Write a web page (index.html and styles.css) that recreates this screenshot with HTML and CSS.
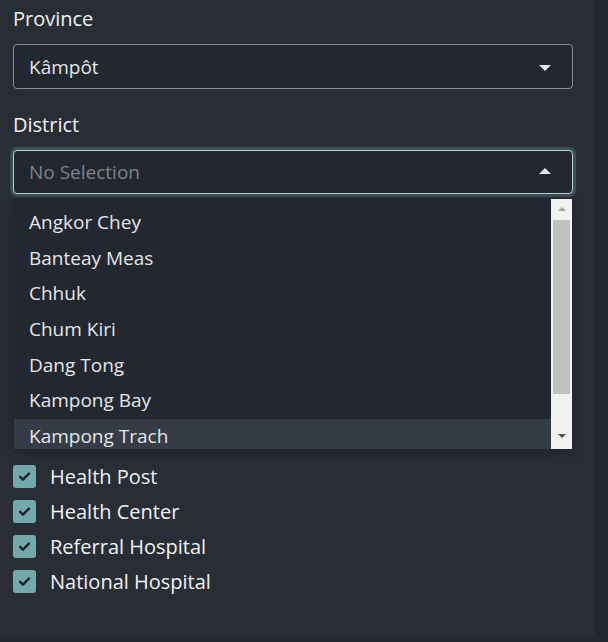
FILE: index.html
```html
<!DOCTYPE html>
<html lang="en">
<head>
<meta charset="utf-8">
<link rel="stylesheet" href="styles.css">
</head>
<body>
<div class="panel">
  <div class="field">
    <label class="label">Province</label>
    <div class="select">
      <span class="value">Kâmpôt</span>
      <span class="caret down"></span>
    </div>
  </div>
  <div class="field district">
    <label class="label">District</label>
    <div class="select focused">
      <span class="value placeholder">No Selection</span>
      <span class="caret up"></span>
    </div>
    <div class="menu">
      <ul class="options">
        <li>Angkor Chey</li>
        <li>Banteay Meas</li>
        <li>Chhuk</li>
        <li>Chum Kiri</li>
        <li>Dang Tong</li>
        <li>Kampong Bay</li>
        <li class="active">Kampong Trach</li>
      </ul>
      <div class="scrollbar">
        <span class="sb-arrow sb-up"></span>
        <span class="sb-thumb"></span>
        <span class="sb-arrow sb-down"></span>
      </div>
    </div>
  </div>
  <div class="checks">
    <label class="check"><span class="box"><svg viewBox="0 0 24 24" width="15" height="15"><path d="M5 12.5l4.5 4.5L19 7.5" fill="none" stroke="#20252c" stroke-width="4" stroke-linecap="round" stroke-linejoin="round"/></svg></span>Health Post</label>
    <label class="check"><span class="box"><svg viewBox="0 0 24 24" width="15" height="15"><path d="M5 12.5l4.5 4.5L19 7.5" fill="none" stroke="#20252c" stroke-width="4" stroke-linecap="round" stroke-linejoin="round"/></svg></span>Health Center</label>
    <label class="check"><span class="box"><svg viewBox="0 0 24 24" width="15" height="15"><path d="M5 12.5l4.5 4.5L19 7.5" fill="none" stroke="#20252c" stroke-width="4" stroke-linecap="round" stroke-linejoin="round"/></svg></span>Referral Hospital</label>
    <label class="check"><span class="box"><svg viewBox="0 0 24 24" width="15" height="15"><path d="M5 12.5l4.5 4.5L19 7.5" fill="none" stroke="#20252c" stroke-width="4" stroke-linecap="round" stroke-linejoin="round"/></svg></span>National Hospital</label>
  </div>
</div>
</body>
</html>
```
FILE: styles.css
```css
* { box-sizing: border-box; }
html, body {
  margin: 0;
  padding: 0;
  background: #222730;
  font-family: "Open Sans", "Noto Sans", sans-serif;
  color: #e6e8ea;
}
.panel {
  width: 595px;
  height: 637px;
  background: #282d36;
  border-bottom-right-radius: 5px;
  padding: 7px 22px 0 13px;
  display: flex;
  flex-direction: column;
}
.field {
  display: flex;
  flex-direction: column;
}
.label {
  font-size: 20px;
  line-height: 24px;
  height: 24px;
  color: #f0f2f4;
  margin-bottom: 13px;
}
.district {
  margin-top: 24px;
  position: relative;
}
.select {
  height: 45px;
  border: 1px solid #8a8e94;
  border-radius: 4px;
  background: #222730;
  display: flex;
  align-items: center;
  padding: 0 21px 0 15px;
  justify-content: space-between;
}
.select.focused {
  height: 44px;
  border-color: #b4d4d4;
  box-shadow: 0 0 0 3px #3c4f55;
}
.value {
  font-size: 19px;
  color: #e4e6e8;
}
.placeholder { color: #7d8389; }
.caret {
  width: 0;
  height: 0;
  border-left: 6px solid transparent;
  border-right: 6px solid transparent;
}
.caret.down { border-top: 6px solid #e4e6e8; margin-top: 2px; }
.caret.up { border-bottom: 6px solid #e4e6e8; margin-top: -2px; }

.menu {
  position: absolute;
  left: 0;
  right: 0;
  top: 86px;
  height: 250px;
  background: #222730;
  border: 1px solid #222730;
  border-top: 0;
  border-bottom: 0;
  display: flex;
  overflow: hidden;
  box-shadow: 0 4px 14px rgba(0, 0, 0, 0.22);
}
.options {
  list-style: none;
  margin: 0;
  padding: 6px 0 0;
  flex: 1;
}
.options li {
  height: 35.7px;
  line-height: 35.7px;
  font-size: 19px;
  padding-left: 15px;
  color: #e4e6e8;
  white-space: nowrap;
}
.options li.active { background: #363c45; }
.scrollbar {
  width: 21px;
  background: #f1f1f1;
  position: relative;
  flex: none;
}
.sb-thumb {
  position: absolute;
  left: 2px;
  right: 2px;
  top: 21px;
  height: 174px;
  background: #c1c1c1;
}
.sb-arrow {
  position: absolute;
  left: 7px;
  width: 0;
  height: 0;
  border-left: 4px solid transparent;
  border-right: 4px solid transparent;
}
.sb-up { top: 8px; border-bottom: 4px solid #a3a3a3; }
.sb-down { bottom: 11px; border-top: 4px solid #505050; }

.checks {
  margin-top: 271px;
  display: flex;
  flex-direction: column;
  gap: 12px;
}
.check {
  display: flex;
  align-items: center;
  height: 23px;
  font-size: 20px;
  color: #f0f2f4;
}
.box {
  width: 23px;
  height: 23px;
  border-radius: 3px;
  background: #72aaab;
  display: flex;
  align-items: center;
  justify-content: center;
  margin-right: 14px;
}
```
